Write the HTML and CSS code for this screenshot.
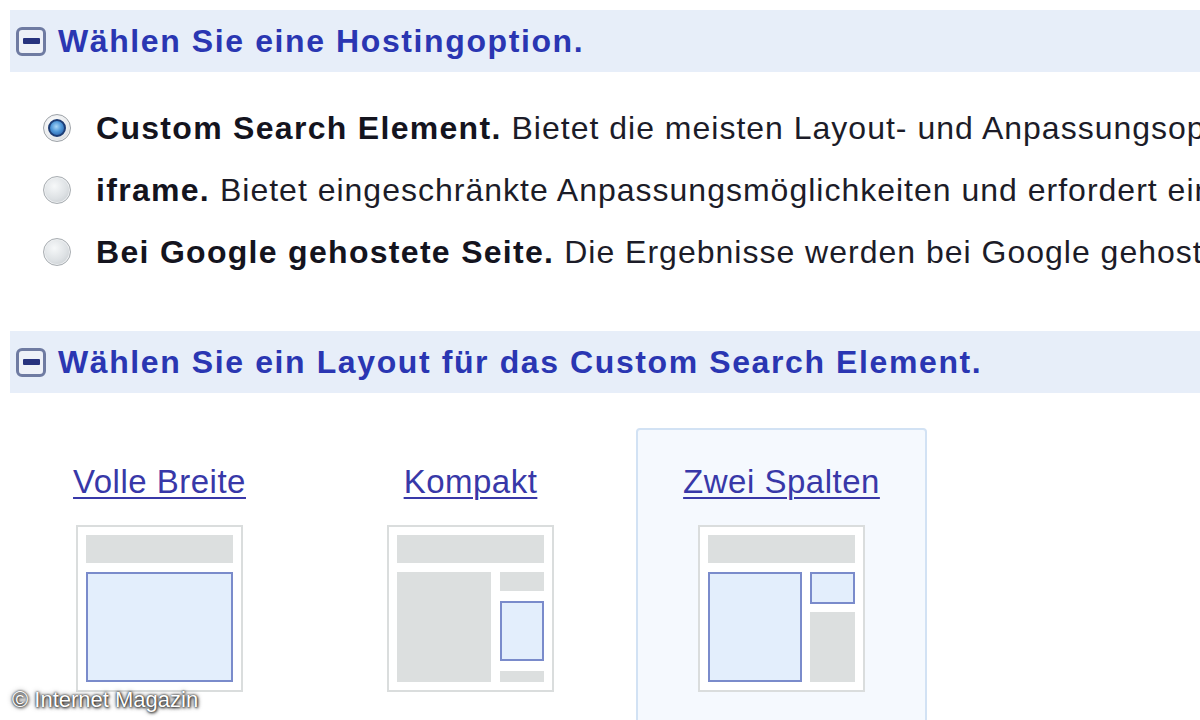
FILE: index.html
```html
<!DOCTYPE html>
<html lang="de">
<head>
    <meta charset="UTF-8">
    <meta name="viewport" content="width=device-width, initial-scale=1.0">
    <title>Custom Search – Hosting und Layout</title>
    <link rel="stylesheet" href="styles.css">
</head>
<body>
    <div class="page">
        <div class="section-head">
            <span class="toggle"></span>
            <h2>Wählen Sie eine Hostingoption.</h2>
        </div>

        <ul class="options">
            <li>
                <span class="radio checked"></span>
                <p><b>Custom Search Element.</b> Bietet die meisten Layout- und Anpassungsoptionen und erfordert JavaScript.</p>
            </li>
            <li>
                <span class="radio"></span>
                <p><b>iframe.</b> Bietet eingeschränkte Anpassungsmöglichkeiten und erfordert einen eigenen Server.</p>
            </li>
            <li>
                <span class="radio"></span>
                <p><b>Bei Google gehostete Seite.</b> Die Ergebnisse werden bei Google gehostet.</p>
            </li>
        </ul>

        <div class="section-head">
            <span class="toggle"></span>
            <h2>Wählen Sie ein Layout für das Custom Search Element.</h2>
        </div>

        <div class="layouts">
            <div class="layout">
                <a href="#">Volle Breite</a>
                <div class="preview">
                    <div class="bar"></div>
                    <div class="body">
                        <div class="box hl"></div>
                    </div>
                </div>
            </div>
            <div class="layout">
                <a href="#">Kompakt</a>
                <div class="preview">
                    <div class="bar"></div>
                    <div class="body compact">
                        <div class="box main"></div>
                        <div class="side">
                            <div class="box top"></div>
                            <div class="box hl grow"></div>
                            <div class="box foot"></div>
                        </div>
                    </div>
                </div>
            </div>
            <div class="layout selected">
                <a href="#">Zwei Spalten</a>
                <div class="preview">
                    <div class="bar"></div>
                    <div class="body">
                        <div class="box hl main"></div>
                        <div class="side">
                            <div class="box hl small"></div>
                            <div class="box grow"></div>
                        </div>
                    </div>
                </div>
            </div>
        </div>
    </div>

    <div class="credit">© Internet Magazin</div>
</body>
</html>
```

FILE: styles.css
```css
* {
    margin: 0;
    padding: 0;
    box-sizing: border-box;
}

body {
    font-family: 'Liberation Sans', Arial, sans-serif;
    background: #fff;
    color: #1c1c28;
    overflow: hidden;
    height: 720px;
    position: relative;
}

.page {
    padding-top: 10px;
    white-space: nowrap;
}

.section-head {
    margin-left: 10px;
    height: 62px;
    background: #e7eef9;
    display: flex;
    align-items: center;
    gap: 12px;
    padding-left: 6px;
}

.toggle {
    width: 30px;
    height: 29px;
    border: 3px solid #6f7ba2;
    border-radius: 6px;
    background: #eef1f8;
    display: flex;
    align-items: center;
    justify-content: center;
}

.toggle::before {
    content: "";
    width: 17px;
    height: 6px;
    background: #28337e;
    border-radius: 1px;
}

.section-head h2 {
    font-size: 32px;
    font-weight: bold;
    letter-spacing: 1.6px;
    color: #2a36b2;
}

.options {
    list-style: none;
    padding: 25px 0 48px;
}

.options li {
    height: 62px;
    display: flex;
    align-items: center;
    gap: 25px;
    padding-left: 43px;
}

.options p {
    font-size: 32px;
    letter-spacing: 1px;
}

.options b {
    color: #14141e;
    letter-spacing: 1.3px;
}

.radio {
    flex: none;
    width: 28px;
    height: 28px;
    border-radius: 50%;
    border: 1px solid #a9aeb2;
    background: radial-gradient(circle at 40% 35%, #f6f8f9 0%, #dde1e4 55%, #bfc4c8 100%);
    box-shadow: inset 0 0 0 1px #eef0f2;
    display: flex;
    align-items: center;
    justify-content: center;
}

.radio.checked {
    border-color: #9ea3a8;
    background: radial-gradient(circle at 40% 35%, #ffffff 0%, #e8eaec 60%, #c0c4c8 100%);
}

.radio.checked::after {
    content: "";
    width: 14px;
    height: 14px;
    border-radius: 50%;
    border: 2px solid #1d3d75;
    background: radial-gradient(circle at 45% 40%, #a9d6f7 0%, #4f97d8 45%, #1d4f9c 100%);
}

.layouts {
    display: flex;
    gap: 20px;
    margin-top: 35px;
    padding-left: 14px;
}

.layout {
    width: 291px;
    height: 320px;
    border: 2px solid transparent;
    border-radius: 4px 4px 0 0;
    padding-top: 33px;
    display: flex;
    flex-direction: column;
    align-items: center;
    gap: 24px;
}

.layout.selected {
    background: #f5f9fe;
    border-color: #d2e2f4;
}

.layout a {
    font-size: 33px;
    line-height: 38px;
    letter-spacing: 0.5px;
    color: #3838a8;
    text-decoration-thickness: 2px;
    text-underline-offset: 4px;
}

.preview {
    width: 167px;
    height: 167px;
    border: 2px solid #dadddd;
    background: #fff;
    padding: 8px;
    display: flex;
    flex-direction: column;
    gap: 9px;
}

.preview .bar {
    height: 28px;
    background: #dcdfdf;
}

.preview .body {
    flex: 1;
    display: flex;
    gap: 8px;
}

.preview .body.compact {
    gap: 9px;
}

.box {
    background: #dcdfdf;
}

.box.hl {
    flex: 1;
    background: #e3eefc;
    border: 2px solid #7a8bcb;
}

.box.main {
    flex: none;
    width: 94px;
}

.side {
    flex: 1;
    display: flex;
    flex-direction: column;
    gap: 8px;
}

.compact .side {
    gap: 10px;
}

.side .top {
    height: 19px;
}

.side .foot {
    height: 11px;
}

.side .small {
    flex: none;
    height: 32px;
}

.side .grow {
    flex: 1;
}

.credit {
    position: absolute;
    left: 12px;
    bottom: 7px;
    font-size: 22px;
    color: #fff;
    text-shadow: 0 0 2px #111, 1px 1px 3px #333, 0 0 5px #555;
}
```
